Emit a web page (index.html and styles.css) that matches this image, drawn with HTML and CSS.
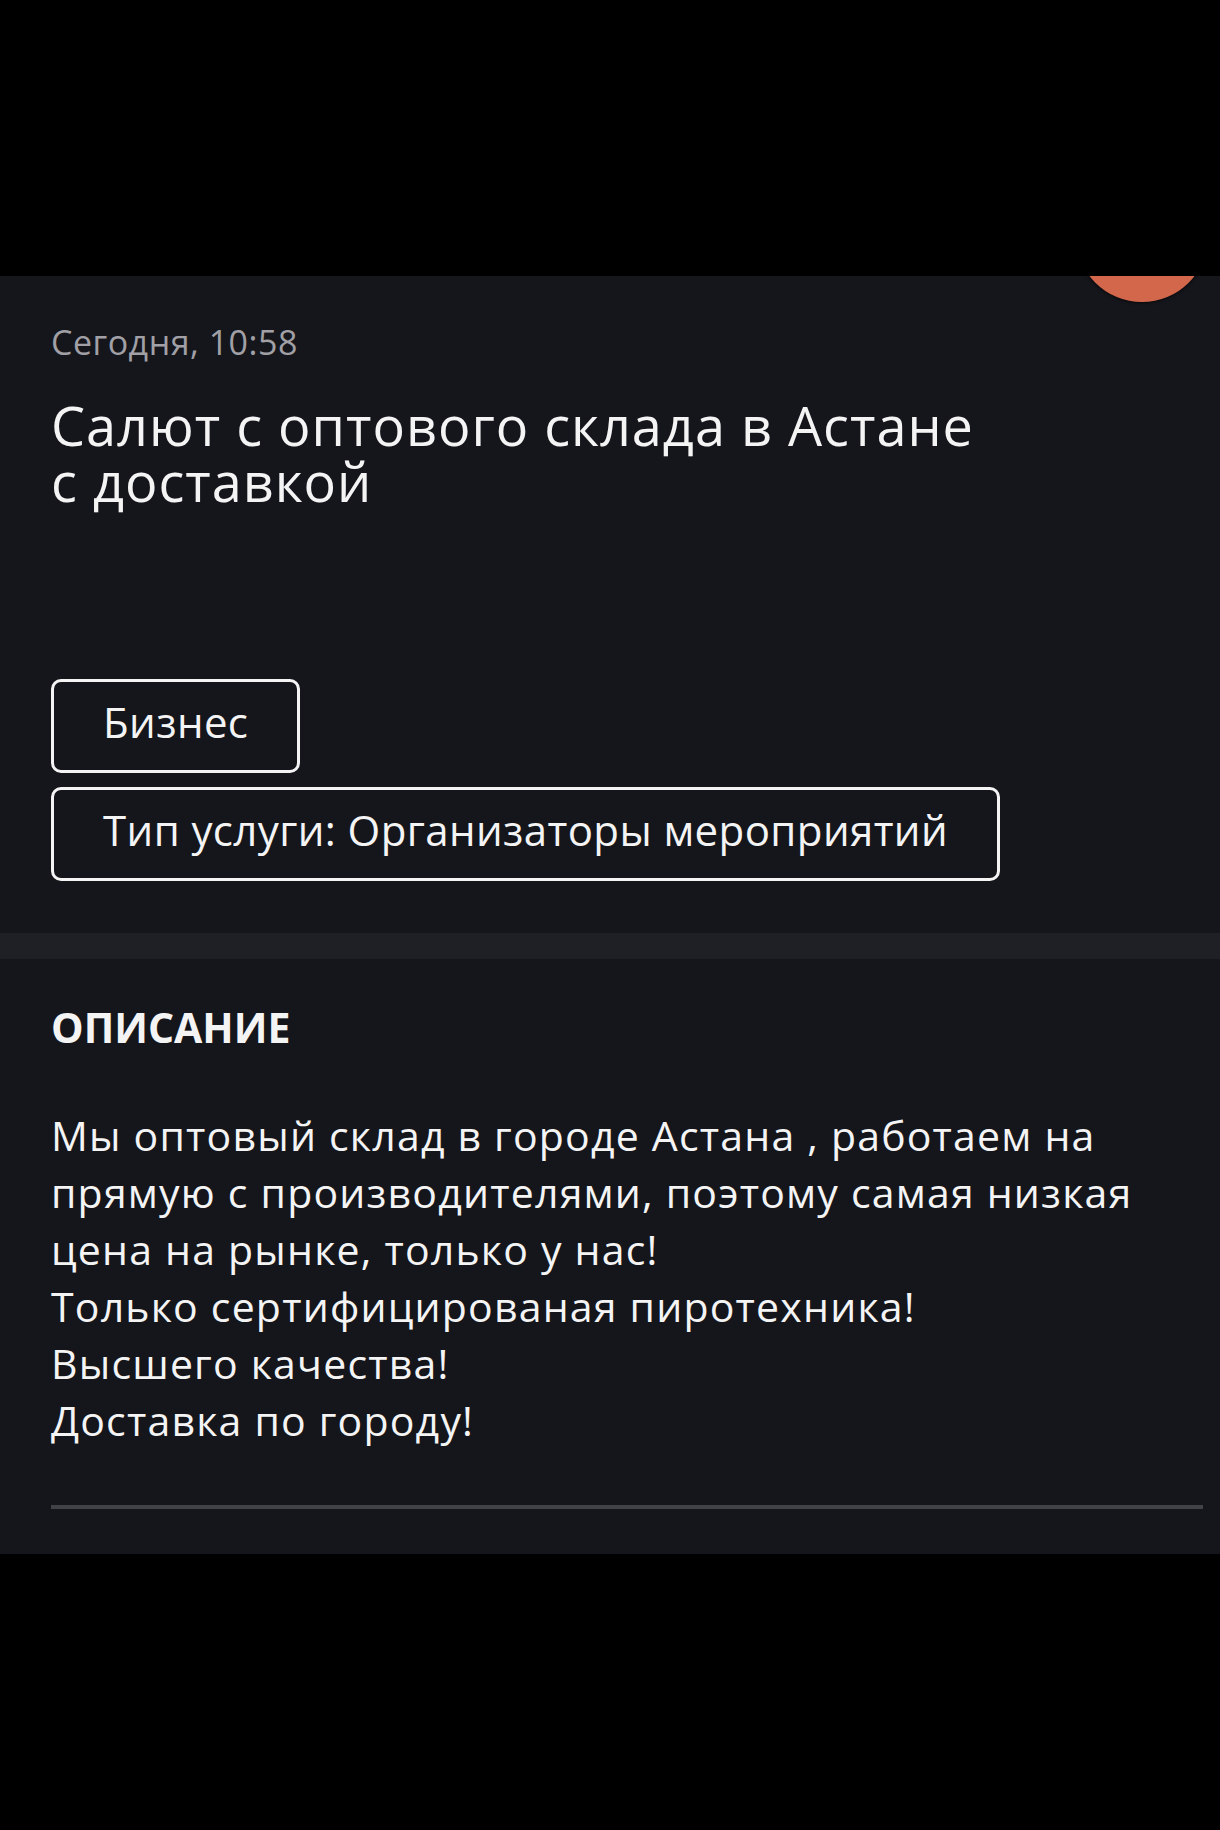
FILE: index.html
```html
<!DOCTYPE html>
<html>

<head>
    <title>Салют с оптового склада в Астане с доставкой</title>
    <link rel="stylesheet" href="styles.css">
</head>

<body>
    <div class="top-bar"></div>

    <div class="listing">
        <div class="panel header-panel">
            <div class="fav-badge"></div>
            <div class="date">Сегодня, 10:58</div>
            <h1 class="title">Салют с оптового склада в Астане<br>с доставкой</h1>

            <div class="tags">
                <div class="tag">Бизнес</div>
                <div class="tag">Тип услуги: Организаторы мероприятий</div>
            </div>
        </div>

        <div class="panel desc-panel">
            <h2 class="section-title">ОПИСАНИЕ</h2>
            <p class="description">Мы оптовый склад в городе Астана , работаем на прямую с производителями, поэтому самая низкая цена на рынке, только у нас!<br>Только сертифицированая пиротехника!<br>Высшего качества!<br>Доставка по городу!</p>
            <div class="divider"></div>
        </div>
    </div>

    <div class="bottom-bar"></div>
</body>

</html>
```

FILE: styles.css
```css
body {
    font-family: "Open Sans", "Noto Sans", sans-serif;
    background-color: #000;
    color: #f4f4f5;
    margin: 0;
    padding: 0;
}

.top-bar {
    height: 276px;
    background-color: #000;
    position: relative;
    z-index: 2;
}

.listing {
    display: flex;
    flex-direction: column;
    gap: 26px;
    background-color: #1f2025;
}

.panel {
    background-color: #15161b;
}

.header-panel {
    position: relative;
    padding: 46px 51px 52px;
}

.fav-badge {
    position: absolute;
    top: -106px;
    left: 1076px;
    width: 132px;
    height: 132px;
    border-radius: 50%;
    background-color: #d2674c;
    box-shadow: 0 0 3px 1px rgba(0, 0, 0, 0.6);
}

.date {
    font-size: 34px;
    line-height: 40px;
    letter-spacing: 0.5px;
    color: #a0a0a6;
}

.title {
    margin: 35px 0 0;
    font-size: 54px;
    line-height: 56px;
    letter-spacing: 1px;
    font-weight: normal;
}

.tags {
    display: flex;
    flex-direction: column;
    align-items: flex-start;
    gap: 14px;
    margin-top: 170px;
}

.tag {
    font-size: 42px;
    line-height: 44px;
    letter-spacing: 0.4px;
    padding: 18px 49px 26px;
    border: 3px solid #f4f4f5;
    border-radius: 10px;
}

.desc-panel {
    padding: 43px 17px 45px 51px;
}

.section-title {
    margin: 0;
    font-size: 41px;
    line-height: 50px;
    font-weight: bold;
}

.description {
    margin: 55px 0 0;
    font-size: 41px;
    line-height: 57px;
    letter-spacing: 1.2px;
}

.divider {
    margin-top: 56px;
    height: 4px;
    background-color: #414247;
}

.bottom-bar {
    height: 277px;
    background-color: #000;
}
```
